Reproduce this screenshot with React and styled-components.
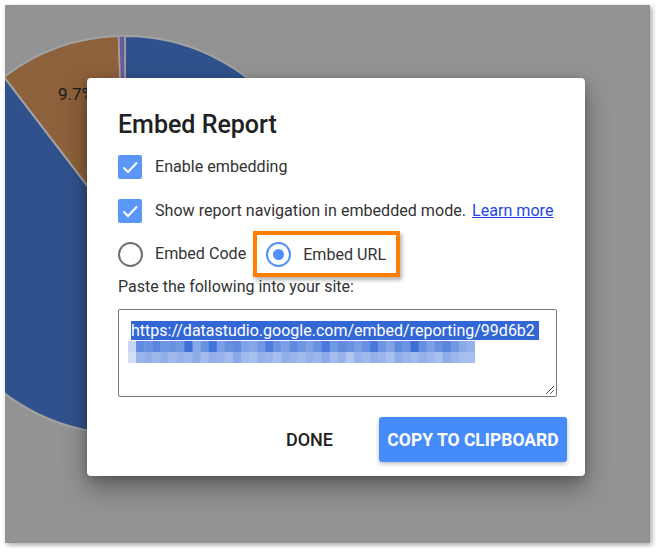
import React from "react";
import styled, { createGlobalStyle } from "styled-components";

const Global = createGlobalStyle`
  html, body { margin: 0; padding: 0; background: #ffffff; }
  body { font-family: Roboto, "Liberation Sans", Arial, sans-serif; }
`;

const Frame = styled.div`
  position: relative;
  box-sizing: border-box;
  width: 645px;
  height: 538px;
  margin: 5px;
  background: #939393;
  overflow: hidden;
  box-shadow: 2px 2px 5px rgba(0, 0, 0, 0.35);
  padding: 73px 0 0 82px;
`;

const Chart = styled.svg`
  position: absolute;
  left: 0;
  top: 0;
`;

const Dialog = styled.div`
  position: relative;
  z-index: 1;
  box-sizing: border-box;
  width: 498px;
  height: 398px;
  background: #ffffff;
  border-radius: 4px;
  padding: 33px 28px 0 31px;
  display: flex;
  flex-direction: column;
  box-shadow: 0 12px 26px rgba(0, 0, 0, 0.35), 0 2px 8px rgba(0, 0, 0, 0.2);
`;

const Title = styled.h2`
  margin: 0;
  font-size: 25px;
  line-height: 28px;
  font-weight: 500;
  color: #212121;
`;

const Row = styled.div`
  display: flex;
  align-items: center;
  height: ${(p) => p.$h || 24}px;
  margin-top: ${(p) => p.$mt || 0}px;
  font-size: 16.1px;
  line-height: 20px;
  color: #333333;
  white-space: nowrap;
`;

const Box = styled.span`
  display: inline-flex;
  align-items: center;
  justify-content: center;
  width: 24px;
  height: 24px;
  border-radius: 2px;
  background: #5a97f9;
  margin-right: 13px;
  flex: none;
`;

const Radio = styled.span`
  box-sizing: border-box;
  display: inline-flex;
  align-items: center;
  justify-content: center;
  width: 25px;
  height: 25px;
  border-radius: 50%;
  border: 2px solid ${(p) => (p.$on ? "#4d90fe" : "#6f6f6f")};
  margin-right: 12px;
  flex: none;
  &::after {
    content: "";
    display: ${(p) => (p.$on ? "block" : "none")};
    width: 11px;
    height: 11px;
    border-radius: 50%;
    background: #4d90fe;
  }
`;

const Option = styled.span`
  display: inline-flex;
  align-items: center;
`;

const Highlight = styled.span`
  box-sizing: border-box;
  display: inline-flex;
  align-items: center;
  height: 46px;
  margin-left: 7px;
  padding: 1px 10px 0 9px;
  border: 4px solid #ff8000;
  box-shadow: 2px 3px 4px rgba(0, 0, 0, 0.3);
`;

const Link = styled.a`
  color: #1f45e6;
  text-decoration: underline;
  margin-left: 6px;
`;

const Hint = styled.div`
  font-size: 16px;
  line-height: 20px;
  color: #333333;
  margin-top: 0;
`;

const Field = styled.div`
  position: relative;
  box-sizing: border-box;
  width: 439px;
  height: 88px;
  margin-top: 12px;
  border: 1px solid #767676;
  border-radius: 2px;
  padding: 11px 12px 0 12px;
  font-size: 16px;
  line-height: 20px;
`;

const Selected = styled.span`
  background: #3367d6;
  color: #ffffff;
  padding-right: 4px;
`;

const Mosaic = styled.svg`
  display: block;
  margin-left: -3px;
`;

const Grip = styled.svg`
  position: absolute;
  right: 1px;
  bottom: 1px;
`;

const Actions = styled.div`
  display: flex;
  justify-content: flex-end;
  align-items: center;
  gap: 30px;
  margin-top: 20px;
  margin-right: -10px;
`;

const FlatButton = styled.button`
  border: none;
  background: transparent;
  font-family: inherit;
  font-size: 18px;
  font-weight: 500;
  color: #212121;
  padding: 0 16px;
  height: 45px;
`;

const RaisedButton = styled.button`
  border: none;
  background: #468bfb;
  color: #ffffff;
  font-family: inherit;
  font-size: 17.5px;
  font-weight: 700;
  width: 188px;
  height: 45px;
  border-radius: 3px;
  padding: 0;
  box-shadow: 0 2px 4px rgba(0, 0, 0, 0.25);
`;

function polar(cx, cy, r, deg) {
  const a = (deg * Math.PI) / 180;
  return [cx + r * Math.sin(a), cy - r * Math.cos(a)];
}

function slice(cx, cy, r, a0, a1) {
  const [x0, y0] = polar(cx, cy, r, a0);
  const [x1, y1] = polar(cx, cy, r, a1);
  const large = a1 - a0 > 180 ? 1 : 0;
  return `M${cx},${cy} L${x0},${y0} A${r},${r} 0 ${large} 1 ${x1},${y1} Z`;
}

function PieBackdrop() {
  const cx = 120, cy = 230, r = 199;
  return (
    <Chart width="645" height="538" viewBox="0 0 645 538">
      <path d={slice(cx, cy, r, 0, 322.6)} fill="#30528c" stroke="#a2a2a2" strokeWidth="2" />
      <path d={slice(cx, cy, r, -37.4, -1.8)} fill="#8d613b" stroke="#a2a2a2" strokeWidth="2" />
      <path d={slice(cx, cy, r, -1.8, 0)} fill="#6c5a98" stroke="#a2a2a2" strokeWidth="1.5" />
      <text x="53" y="95" fontFamily="Roboto, Arial, sans-serif" fontSize="17" fill="#1a1a1a">9.7%</text>
    </Chart>
  );
}

const shades1 = [
  "#c9d6f3", "#5f8ae0", "#6a92e2", "#5b86de", "#6e95e2", "#6a92e2", "#7099e4", "#3e6fd9",
  "#8aa9e8", "#6a92e2", "#4273da", "#7a9fe5", "#6790e1", "#5f8ae0", "#7ea2e6", "#86a7e7",
  "#6f97e3", "#4e7cdc", "#6b93e2", "#7a9fe5", "#5d89df", "#6d95e2", "#7c9fe5", "#6a92e2",
  "#4b79dc", "#7099e4", "#5f8ae0", "#6891e1", "#789de4", "#6690e1", "#4a78db", "#6e95e2",
  "#82a4e6", "#5f8ae0", "#6c93e2", "#3f70d9", "#6790e1", "#7da1e5", "#6991e1", "#5a86de",
  "#7299e3", "#8aa9e8", "#94b1ea",
];
const shades2 = [
  "#d3def5", "#9ab5eb", "#93afea", "#9bb6eb", "#8faceb", "#a1baec", "#98b3eb", "#9db7ec",
  "#8eabe9", "#a4bdee", "#94b0ea", "#99b4eb", "#a3bced", "#8ba9e8", "#9fb9ec", "#a8c0ee",
  "#94b0ea", "#9bb6eb", "#a6beee", "#8fade9", "#99b4eb", "#a2bbed", "#96b2ea", "#9db7ec",
  "#8baae9", "#a4bdee", "#98b3eb", "#b0c6f0", "#96b2ea", "#a0b9ec", "#93afea", "#9cb6eb",
  "#a7bfee", "#8eace9", "#99b4eb", "#a2bbed", "#95b1ea", "#9fb8ec", "#a9c1ef", "#8facea",
  "#9bb6eb", "#a5beee", "#a7bfef",
];

function Pixelated() {
  const w = 347 / shades1.length;
  return (
    <Mosaic width="347" height="22" viewBox="0 0 347 22">
      {shades1.map((c, i) => (
        <rect key={"a" + i} x={i * w} y="0" width={w + 0.5} height="11" fill={c} />
      ))}
      {shades2.map((c, i) => (
        <rect key={"b" + i} x={i * w} y="11" width={w + 0.5} height="11" fill={c} />
      ))}
    </Mosaic>
  );
}

function Check() {
  return (
    <svg width="24" height="24" viewBox="0 0 24 24">
      <polyline points="5.5,12.5 10,17 19,7.5" fill="none" stroke="#ffffff" strokeWidth="2" />
    </svg>
  );
}

export default function App() {
  return (
    <>
      <Global />
      <Frame>
        <PieBackdrop />
        <Dialog>
          <Title>Embed Report</Title>
          <Row $mt={16}>
            <Box><Check /></Box>
            Enable embedding
          </Row>
          <Row $mt={20}>
            <Box><Check /></Box>
            Show report navigation in embedded mode.
            <Link href="#">Learn more</Link>
          </Row>
          <Row $mt={8} $h={46}>
            <Option>
              <Radio />
              Embed Code
            </Option>
            <Highlight>
              <Radio $on />
              Embed URL
            </Highlight>
          </Row>
          <Hint>Paste the following into your site:</Hint>
          <Field>
            <Selected>https://datastudio.google.com/embed/reporting/99d6b2</Selected>
            <Pixelated />
            <Grip width="12" height="12" viewBox="0 0 12 12">
              <line x1="3" y1="11" x2="11" y2="3" stroke="#555" strokeWidth="1" />
              <line x1="7" y1="11" x2="11" y2="7" stroke="#555" strokeWidth="1" />
            </Grip>
          </Field>
          <Actions>
            <FlatButton>DONE</FlatButton>
            <RaisedButton>COPY TO CLIPBOARD</RaisedButton>
          </Actions>
        </Dialog>
      </Frame>
    </>
  );
}
